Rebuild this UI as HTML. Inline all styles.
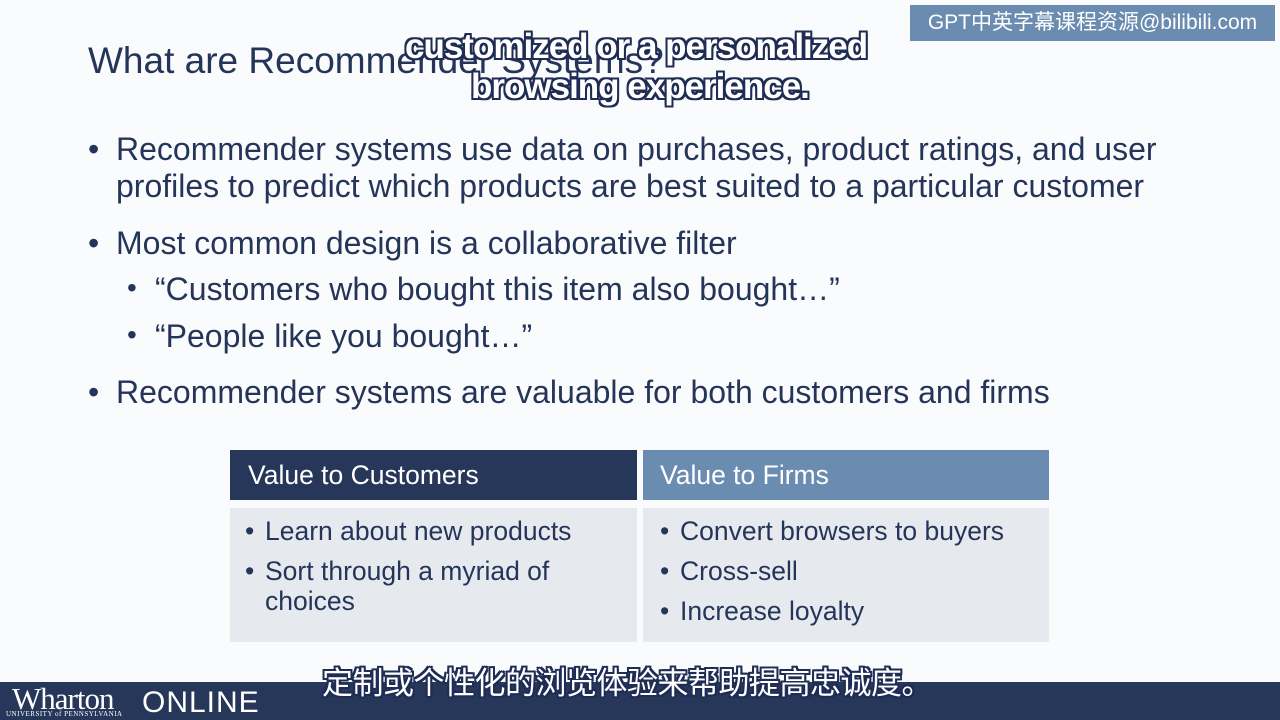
<!DOCTYPE html>
<html><head><meta charset="utf-8"><style>
body{margin:0;width:1280px;height:720px;background:#fafbfc;position:relative;overflow:hidden;font-family:"Liberation Sans",Arial,sans-serif;color:#253559}
.a{position:absolute;white-space:nowrap}
.t{font-size:37px;left:88px;top:40px;color:#253559}
.b{font-size:32px}
.s{font-size:35px;font-weight:bold;color:#fff;text-shadow:-2px -2px 0 #1f2d55,2px -2px 0 #1f2d55,-2px 2px 0 #1f2d55,2px 2px 0 #1f2d55,0 2px 0 #1f2d55,0 -2px 0 #1f2d55,2px 0 0 #1f2d55,-2px 0 0 #1f2d55;letter-spacing:-1px}
.box{position:absolute;background:#e6e9ee}
.c{font-size:26.5px}
</style></head><body>
<div class="a t">What are Recommender Systems?</div>
<div class="a" style="left:910px;top:5px;width:365px;height:36px;background:#6a8cb0;color:#fff;font-size:21px;line-height:36px;text-align:center;font-family:'Liberation Sans','Noto Sans CJK SC',sans-serif">GPT中英字幕课程资源@bilibili.com</div>
<div class="a b" style="left:88px;top:131px">•</div>
<div class="a b" style="left:116px;top:131px;line-height:37px">Recommender systems use data on purchases, product ratings, and user<br>profiles to predict which products are best suited to a particular customer</div>
<div class="a b" style="left:88px;top:225px">•</div>
<div class="a b" style="left:116px;top:225px">Most common design is a collaborative filter</div>
<div class="a b" style="left:127px;top:272px;font-size:28px">•</div>
<div class="a b" style="left:155px;top:271px">“Customers who bought this item also bought…”</div>
<div class="a b" style="left:127px;top:319px;font-size:28px">•</div>
<div class="a b" style="left:155px;top:318px">“People like you bought…”</div>
<div class="a b" style="left:88px;top:374px">•</div>
<div class="a b" style="left:116px;top:374px">Recommender systems are valuable for both customers and firms</div>
<div class="box" style="left:230px;top:450px;width:407px;height:50px;background:#263759"></div>
<div class="box" style="left:643px;top:450px;width:406px;height:50px;background:#6a8cb0"></div>
<div class="a c" style="left:248px;top:460px;color:#fff">Value to Customers</div>
<div class="a c" style="left:660px;top:460px;color:#fff">Value to Firms</div>
<div class="box" style="left:230px;top:508px;width:407px;height:134px"></div>
<div class="box" style="left:643px;top:508px;width:406px;height:134px"></div>
<div class="a c" style="left:245px;top:516px;line-height:30px">•</div>
<div class="a c" style="left:265px;top:516px;line-height:30px">Learn about new products</div>
<div class="a c" style="left:245px;top:556px;line-height:30px">•</div>
<div class="a c" style="left:265px;top:556px;line-height:30px">Sort through a myriad of<br>choices</div>
<div class="a c" style="left:660px;top:511px;line-height:40px">•<br>•<br>•</div>
<div class="a c" style="left:680px;top:511px;line-height:40px">Convert browsers to buyers<br>Cross-sell<br>Increase loyalty</div>
<div class="a" style="left:0;top:682px;width:1280px;height:38px;background:#263759"></div>
<div class="a" style="left:12px;top:681px;color:#fff;font-family:'Liberation Serif',serif;font-size:31px;letter-spacing:-1px">Wharton</div>
<div class="a" style="left:6px;top:710px;color:#fff;font-family:'Liberation Serif',serif;font-size:7px;letter-spacing:0.5px">UNIVERSITY of PENNSYLVANIA</div>
<div class="a" style="left:142px;top:686px;color:#fff;font-size:30px;letter-spacing:1px">ONLINE</div>
<div class="a s" style="left:405px;top:27px">customized or a personalized</div>
<div class="a s" style="left:471px;top:67px">browsing experience.</div>
<div class="a s" style="left:322px;top:658px;font-family:'Liberation Sans','Noto Sans CJK SC',sans-serif;font-size:31px;font-weight:normal;letter-spacing:-0.5px">定制或个性化的浏览体验来帮助提高忠诚度。</div>
</body></html>
